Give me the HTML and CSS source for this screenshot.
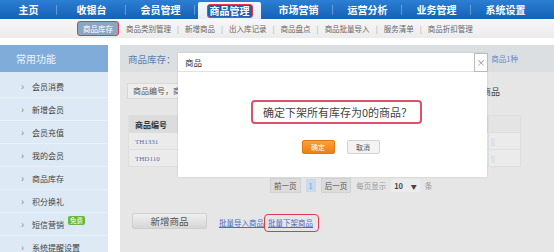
FILE: index.html
```html
<!DOCTYPE html>
<html lang="zh-CN">
<head>
    <meta charset="UTF-8">
    <title>商品库存</title>
    <link rel="stylesheet" href="styles.css">
</head>
<body class="page">
<div class="topnav">
    <a class="nav-item nav-first">主页</a>
    <a class="nav-item">收银台</a>
    <a class="nav-item">会员管理</a>
    <a class="nav-item nav-active"><span class="mark">商品管理</span></a>
    <a class="nav-item">市场营销</a>
    <a class="nav-item">运营分析</a>
    <a class="nav-item">业务管理</a>
    <a class="nav-item nav-last">系统设置</a>
</div>
<div class="subnav">
    <a class="sub-active">商品库存</a>
    <a>商品类别管理</a><i>|</i>
    <a>新增商品</a><i>|</i>
    <a>出入库记录</a><i>|</i>
    <a>商品盘点</a><i>|</i>
    <a>商品批量导入</a><i>|</i>
    <a>服务清单</a><i>|</i>
    <a>商品折扣管理</a>
</div>

<div class="layout">
    <div class="sidebar">
        <div class="side-head">常用功能</div>
        <ul class="side-list">
            <li><b>›</b>会员消费</li>
            <li><b>›</b>新增会员</li>
            <li><b>›</b>会员充值</li>
            <li><b>›</b>我的会员</li>
            <li><b>›</b>商品库存</li>
            <li><b>›</b>积分换礼</li>
            <li><b>›</b>短信营销<span class="badge">免费</span></li>
            <li><b>›</b>系统提醒设置</li>
        </ul>
    </div>

    <div class="main">
        <div class="panel-head">
            <span class="panel-title">商品库存：</span>
            <span class="panel-count">商品1种</span>
        </div>
        <div class="search-row">
            <div class="search-box">商品编号，商品名称</div>
            <span class="search-btn">查询商品</span>
        </div>
        <table class="goods">
            <tr class="goods-head">
                <th class="first">商品编号</th>
                <th class="wide">商品名称</th>
                <th class="last"></th>
            </tr>
            <tr>
                <td><a>TH1331</a></td>
                <td class="wide">测试商品</td>
                <td class="last">||</td>
            </tr>
            <tr>
                <td><a>THD110</a></td>
                <td class="wide">测试商品</td>
                <td class="last">||</td>
            </tr>
        </table>
        <div class="pager">
            <span class="pg-btn">前一页</span>
            <span class="pg-num">1</span>
            <span class="pg-btn">后一页</span>
            <span class="pg-text">每页显示</span>
            <span class="pg-select">10 <em>▼</em></span>
            <span class="pg-text">条</span>
        </div>
        <div class="actions">
            <button class="btn-add">新增商品</button>
            <a class="link">批量导入商品</a>
            <a class="link link-mark">批量下架商品</a>
        </div>

        <div class="modal">
            <div class="modal-head">商品</div>
            <span class="modal-close">×</span>
            <div class="modal-body">
                <div class="msg">确定下架所有库存为0的商品？</div>
                <div class="modal-btns">
                    <button class="btn-ok">确定</button>
                    <button class="btn-cancel">取消</button>
                </div>
            </div>
        </div>
    </div>
</div>
</body>
</html>
```

FILE: styles.css
```css
* {
    box-sizing: border-box;
}

.page {
    margin: 0;
    background: #fff;
    font-family: "Noto Sans CJK SC", "Liberation Sans", sans-serif;
    color: #333;
    overflow: hidden;
}

a {
    cursor: pointer;
}

/* top navigation */
.topnav {
    display: flex;
    height: 19px;
    background: linear-gradient(#2c7fd3, #1461b8);
}

.nav-item {
    width: 69px;
    display: flex;
    align-items: center;
    justify-content: center;
    color: #fff;
    font-size: 10px;
    font-weight: bold;
    position: relative;
}

.nav-item:after {
    content: "";
    position: absolute;
    right: 0;
    top: 5px;
    height: 10px;
    border-right: 1px solid rgba(255, 255, 255, 0.3);
}

.nav-first {
    width: 57px;
}

.nav-last:after,
.nav-active:after {
    display: none;
}

.nav-active {
    margin: 2px 3px 0 3px;
    width: 63px;
    background: linear-gradient(#f6f9fc, #e4ecf5);
    border-radius: 2px 2px 0 0;
}

.mark {
    background: #1c5eaf;
    color: #fff;
    border: 1.5px solid #e2384e;
    border-radius: 3px;
    padding: 0 2px;
    line-height: 12px;
}

/* sub navigation */
.subnav {
    height: 19px;
    display: flex;
    align-items: center;
    padding-left: 77px;
    background: linear-gradient(#f7f7f7, #ececec);
    font-size: 7.5px;
    color: #666;
}

.subnav a {
    white-space: nowrap;
}

.subnav i {
    font-style: normal;
    color: #aaa;
    margin: 0 6px;
}

.subnav .sub-active {
    background: #8ba6c3;
    color: #fff;
    border: 1.5px solid #e2384e;
    border-radius: 3px;
    padding: 1px 5px;
    margin-right: 7px;
}

/* page layout */
.layout {
    display: flex;
    gap: 12px;
    margin-top: 7px;
    height: 207px;
}

.sidebar {
    width: 108px;
    background: #dde9f5;
}

.side-head {
    height: 27px;
    line-height: 27px;
    background: #80acd9;
    color: #eef4fb;
    font-size: 10px;
    padding-left: 16px;
}

.side-list {
    list-style: none;
    margin: 3px 0 0 0;
    padding: 0;
}

.side-list li {
    height: 23px;
    display: flex;
    align-items: center;
    padding-left: 21px;
    font-size: 8px;
    color: #444;
    border-bottom: 1px solid #e8f0f8;
}

.side-list b {
    font-weight: normal;
    color: #8a8a8a;
    font-size: 10px;
    width: 11px;
    margin-top: -2px;
}

.badge {
    background: #66b83a;
    color: #fff;
    font-size: 6.5px;
    padding: 0 2px;
    line-height: 9px;
    border-radius: 2px;
    margin: 0 0 7px 4px;
}

/* main panel */
.main {
    flex: 1;
    position: relative;
    background: #e6e6e6;
}

.panel-head {
    height: 27px;
    display: flex;
    align-items: center;
    justify-content: space-between;
    padding: 0 36px 0 8px;
    background: #dcdfe2;
}

.panel-title {
    color: #5a7fb2;
    font-size: 9.5px;
}

.panel-count {
    color: #6b86c0;
    font-size: 7.5px;
}

.search-row {
    display: flex;
    align-items: center;
    justify-content: space-between;
    margin: 11px 0 0 7px;
    padding-right: 54px;
}

.search-box {
    width: 150px;
    height: 16px;
    line-height: 14px;
    border: 1px solid #d8d8d8;
    background: #eeeeee;
    font-size: 8px;
    color: #555;
    padding-left: 5px;
}

.search-btn {
    font-size: 9px;
    color: #444;
}

.goods {
    margin: 16px 0 0 8px;
    width: 392px;
    table-layout: fixed;
    border-collapse: collapse;
    font-size: 7px;
}

.goods th,
.goods td {
    text-align: left;
    padding-left: 6px;
    white-space: nowrap;
    overflow: hidden;
    border: 1px solid #dedede;
}

.goods-head th {
    height: 17px;
    background: #dcdcdc;
    font-size: 8px;
    color: #333;
}

.goods-head th.last {
    background: #e4e4e4;
}

.goods td {
    height: 17px;
    background: #ebebeb;
    color: #888;
}

.goods td.last {
    color: #c4c4c4;
    padding-left: 2px;
}

.goods td a {
    color: #5670b0;
    font-family: "Liberation Serif", serif;
}

.goods .first {
    width: 52px;
}

.goods .wide {
    width: 308px;
}

.goods .last {
    width: 32px;
}

/* pager */
.pager {
    display: flex;
    align-items: center;
    gap: 5px;
    margin: 11px 0 0 150px;
    font-size: 7.5px;
    color: #555;
}

.pg-btn {
    background: #dcdcdc;
    border: 1px solid #d2d2d2;
    padding: 1px 3px;
}

.pg-num {
    background: #c8dbee;
    color: #7a9cc6;
    padding: 1px 3px;
}

.pg-text {
    color: #999;
}

.pg-select {
    background: #ececec;
    font-weight: bold;
    padding: 1px 3px;
    color: #444;
}

.pg-select em {
    font-style: normal;
    font-size: 6px;
    margin-left: 6px;
}

/* bottom actions */
.actions {
    display: flex;
    align-items: flex-end;
    margin: 20px 0 0 12px;
    font-size: 7.5px;
}

.btn-add {
    width: 75px;
    height: 16px;
    border: 1px solid #cfcfcf;
    border-radius: 2px;
    background: linear-gradient(#efefef, #d6d6d6);
    color: #555;
    font-family: inherit;
    font-size: 9.5px;
    padding: 0;
    margin-right: 12px;
}

.link {
    color: #4d6cc0;
    text-decoration: underline;
    line-height: 12px;
}

.link-mark {
    border: 1.5px solid #e2384e;
    border-radius: 4px;
    padding: 2px 5px 2px 3px;
    margin-bottom: -3px;
}

/* confirm dialog */
.modal {
    position: absolute;
    left: 58px;
    top: 8px;
    width: 309px;
    height: 124px;
    background: #fff;
    box-shadow: 0 0 2px rgba(0, 0, 0, 0.15);
}

.modal-head {
    height: 19px;
    line-height: 19px;
    padding-left: 7px;
    font-size: 8.5px;
    border-bottom: 1px solid #e2e2e2;
}

.modal-close {
    position: absolute;
    right: -1px;
    top: 0;
    width: 14px;
    height: 19px;
    border: 1px solid #bbb;
    background: #fff;
    color: #888;
    font-size: 9px;
    line-height: 17px;
    text-align: center;
}

.modal-body {
    display: flex;
    flex-direction: column;
    align-items: center;
}

.msg {
    margin: 28px 0 0 8px;
    width: 171px;
    height: 24px;
    line-height: 20px;
    border: 2px solid #e0506a;
    border-radius: 4px;
    font-size: 11px;
    color: #444;
    text-align: center;
    padding-left: 2px;
}

.modal-btns {
    display: flex;
    gap: 12px;
    margin: 16px 0 0 16px;
}

.modal-btns button {
    width: 33px;
    height: 14px;
    padding: 0;
    font-family: inherit;
    font-size: 7px;
    border-radius: 2px;
}

.btn-ok {
    background: linear-gradient(#f7a13e, #ee7f12);
    border: 1px solid #e27a10;
    color: #fff;
}

.btn-cancel {
    background: #f3f3f3;
    border: 1px solid #d3d3d3;
    color: #555;
}
```
